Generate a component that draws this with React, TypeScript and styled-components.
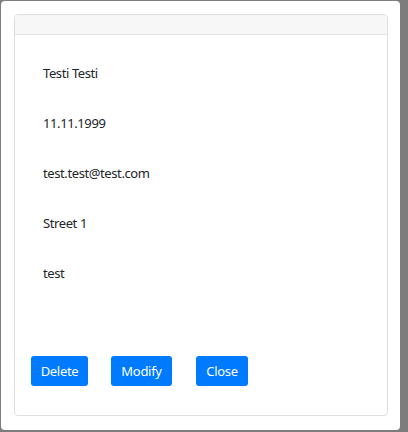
import React from "react";
import styled, { createGlobalStyle } from "styled-components";

const Global = createGlobalStyle`
  html, body { margin: 0; padding: 0; }
  body {
    background: #7d7d7d;
    font-family: "Noto Sans", "Open Sans", sans-serif;
    width: 408px;
    height: 432px;
    overflow: hidden;
  }
`;

const Backdrop = styled.div`
  box-sizing: border-box;
  width: 408px;
  height: 432px;
  padding: 1px 8px 2px 1px;
  display: flex;
`;

const Modal = styled.div`
  box-sizing: border-box;
  flex: 1;
  background: #ffffff;
  border-radius: 4px;
  padding: 13px 12px 14px 13px;
  display: flex;
`;

const Card = styled.div`
  flex: 1;
  display: flex;
  flex-direction: column;
  border: 1px solid #dfdfdf;
  border-radius: 4px;
  overflow: hidden;
`;

const CardHeader = styled.div`
  height: 19px;
  background: #f7f7f7;
  border-bottom: 1px solid #e3e3e3;
`;

const CardBody = styled.div`
  flex: 1;
  display: flex;
  flex-direction: column;
  padding: 28px 16px 0 28px;
`;

const Field = styled.p`
  margin: 0 0 30px 0;
  height: 20px;
  line-height: 20px;
  font-size: 13px;
  letter-spacing: -0.4px;
  color: #212529;
`;

const Actions = styled.div`
  display: flex;
  gap: 23px;
  margin-top: 43px;
  margin-left: -12px;
`;

const Button = styled.button<{ $w: number; $gapBefore?: number }>`
  box-sizing: border-box;
  width: ${(p) => p.$w}px;
  height: 30px;
  margin-left: ${(p) => p.$gapBefore ?? 0}px;
  border: none;
  border-radius: 3px;
  background: #007bff;
  color: #ffffff;
  font-family: "Noto Sans", "Open Sans", sans-serif;
  font-size: 13px;
  letter-spacing: -0.3px;
  padding: 0;
  cursor: pointer;
`;

const fields = ["Testi Testi", "11.11.1999", "test.test@test.com", "Street 1", "test"];

export default function App() {
  return (
    <>
      <Global />
      <Backdrop>
        <Modal>
          <Card>
            <CardHeader />
            <CardBody>
              {fields.map((f) => (
                <Field key={f}>{f}</Field>
              ))}
              <Actions>
                <Button $w={57}>Delete</Button>
                <Button $w={61}>Modify</Button>
                <Button $w={52} $gapBefore={1}>Close</Button>
              </Actions>
            </CardBody>
          </Card>
        </Modal>
      </Backdrop>
    </>
  );
}
